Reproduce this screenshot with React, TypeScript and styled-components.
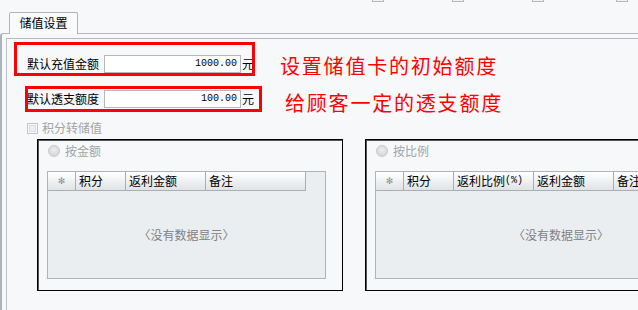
import React from "react";
import styled, { createGlobalStyle } from "styled-components";

const Global = createGlobalStyle`
  html, body { margin: 0; padding: 0; background: #f7f8fa; }
  body { font-family: "Noto Sans CJK SC", "Noto Sans", sans-serif; font-size: 12px; color: #000; }
  #root { width: 638px; height: 310px; overflow: hidden; }
`;

const Page = styled.div`
  width: 638px;
  height: 310px;
  overflow: hidden;
  display: flex;
  flex-direction: column;
  background: #f7f8fa;
`;

const MarkRow = styled.div`
  display: flex;
  height: 2px;
  flex: none;
`;

const Mark = styled.div<{ $left: number }>`
  width: 12px;
  height: 2px;
  box-sizing: border-box;
  margin-left: ${(p) => p.$left}px;
  border: 1px solid #b4b8bc;
  border-top: none;
  background: #f1f2f4;
`;

const TabStrip = styled.div`
  height: 31px;
  flex: none;
  display: flex;
  align-items: flex-end;
  padding-left: 9px;
`;

const Tab = styled.div`
  width: 69px;
  height: 22px;
  box-sizing: border-box;
  margin-bottom: -1px;
  position: relative;
  z-index: 1;
  border: 1px solid #b0b5ba;
  border-bottom: none;
  border-radius: 2px 2px 0 0;
  background: #f9fafb;
  display: flex;
  align-items: center;
  justify-content: center;
  padding-bottom: 2px;
  font-size: 12px;
  line-height: 1;
`;

const Panel = styled.div`
  flex: 1;
  border-top: 1px solid #b4b8bc;
  border-left: 2px solid #aab2ba;
  border-top-left-radius: 3px;
  padding: 4px 0 0 4px;
  display: flex;
  flex-direction: column;
`;

const Inner = styled.div`
  flex: 1;
  border-top: 1px solid #b4b8bc;
  border-left: 1px solid #bcc1c6;
  display: flex;
  flex-direction: column;
`;

const Content = styled.div`
  position: relative;
  padding: 16px 0 0 20px;
  display: flex;
  flex-direction: column;
`;

const Row = styled.div<{ $top?: number }>`
  display: flex;
  align-items: center;
  height: 18px;
  margin-top: ${(p) => p.$top ?? 0}px;
`;

const Label = styled.span`
  width: 77px;
  font-size: 12px;
  line-height: 1;
  white-space: nowrap;
`;

const Input = styled.div`
  width: 137px;
  height: 18px;
  box-sizing: border-box;
  border: 1px solid #b4b8bc;
  background: #fff;
  display: flex;
  align-items: center;
  justify-content: flex-end;
  padding-right: 3px;
  font-family: "Liberation Mono", "DejaVu Sans Mono", monospace;
  font-size: 10px;
  line-height: 1;
`;

const Unit = styled.span`
  margin-left: 1px;
  font-size: 12px;
  line-height: 1;
`;

const Note = styled.span<{ $gap: number; $drop: number }>`
  margin-left: ${(p) => p.$gap}px;
  margin-top: ${(p) => p.$drop}px;
  color: #ff0000;
  font-size: 20px;
  letter-spacing: 1.8px;
  line-height: 20px;
  white-space: nowrap;
`;

const RedFrame = styled.div<{ $x: number; $y: number; $w: number; $h: number }>`
  position: absolute;
  left: ${(p) => p.$x}px;
  top: ${(p) => p.$y}px;
  width: ${(p) => p.$w}px;
  height: ${(p) => p.$h}px;
  box-sizing: border-box;
  border: 3px solid #ff0000;
  pointer-events: none;
`;

const CheckRow = styled.div`
  display: flex;
  align-items: center;
  height: 12px;
  margin-top: 14px;
`;

const CheckBox = styled.span`
  width: 11px;
  height: 11px;
  box-sizing: border-box;
  border: 1px solid #c2c4c7;
  background: #eceef0;
  box-shadow: inset 0 0 0 1px #f7f8f9, inset 0 0 0 2px #dadde0;
`;

const Muted = styled.span`
  margin-left: 4px;
  color: #a2a4a6;
  font-size: 12px;
  line-height: 1;
  white-space: nowrap;
`;

const Groups = styled.div`
  display: flex;
  margin: 5px 0 0 10px;
`;

const Group = styled.div<{ $w: number; $gap?: number }>`
  flex: none;
  width: ${(p) => p.$w}px;
  height: 152px;
  box-sizing: border-box;
  margin-left: ${(p) => p.$gap ?? 0}px;
  border: 1px solid #000;
  box-shadow: inset 1px 1px 0 #555;
  padding: 5px 0 0 10px;
  display: flex;
  flex-direction: column;
`;

const RadioRow = styled.div`
  display: flex;
  align-items: center;
  height: 12px;
`;

const Radio = styled.span`
  width: 12px;
  height: 12px;
  box-sizing: border-box;
  border-radius: 50%;
  border: 1px solid #c8cacc;
  background: radial-gradient(circle at 50% 40%, #eeeff0 0%, #d6d8da 70%);
`;

const RadioText = styled(Muted)`
  margin-left: 5px;
`;

const Grid = styled.div<{ $w: number }>`
  width: ${(p) => p.$w}px;
  height: 108px;
  box-sizing: border-box;
  margin: 14px 0 0 -1px;
  border: 1px solid #aeb3b8;
  background: #ebeef1;
  display: flex;
  flex-direction: column;
`;

const Header = styled.div`
  display: flex;
  align-self: flex-start;
  height: 19px;
  box-sizing: border-box;
  border-bottom: 1px solid #a9aeb3;
`;

const HeadCell = styled.div<{ $w: number; $center?: boolean }>`
  width: ${(p) => p.$w}px;
  box-sizing: border-box;
  border-right: 1px solid #a9aeb3;
  background: linear-gradient(#ffffff, #dfe3e6);
  display: flex;
  align-items: center;
  justify-content: ${(p) => (p.$center ? "center" : "flex-start")};
  padding-left: ${(p) => (p.$center ? 0 : 3)}px;
  font-size: 12px;
  line-height: 1;
  white-space: nowrap;
`;

const Star = styled.span`
  color: #8c8c8c;
  font-family: "DejaVu Sans", sans-serif;
  font-size: 9px;
`;

const Half = styled.span`
  font-family: "Liberation Mono", monospace;
  font-size: 10px;
`;

const Empty = styled.div`
  flex: 1;
  display: flex;
  align-items: center;
  justify-content: center;
  color: #808284;
  font-size: 12px;
  line-height: 1;
`;

type Col = { title: React.ReactNode; w: number };

const DataGrid = ({ width, cols }: { width: number; cols: Col[] }) => (
  <Grid $w={width}>
    <Header>
      <HeadCell $w={28} $center>
        <Star>✻</Star>
      </HeadCell>
      {cols.map((c, i) => (
        <HeadCell key={i} $w={c.w}>
          {c.title}
        </HeadCell>
      ))}
    </Header>
    <Empty>〈没有数据显示〉</Empty>
  </Grid>
);

export default function App() {
  return (
    <Page>
      <Global />
      <MarkRow>
        <Mark $left={372} />
        <Mark $left={68} />
        <Mark $left={68} />
        <Mark $left={72} />
      </MarkRow>
      <TabStrip>
        <Tab>储值设置</Tab>
      </TabStrip>
      <Panel>
        <Inner>
          <Content>
            <Row>
              <Label>默认充值金额</Label>
              <Input>1000.00</Input>
              <Unit>元</Unit>
              <Note $gap={26} $drop={4}>设置储值卡的初始额度</Note>
            </Row>
            <Row $top={17}>
              <Label>默认透支额度</Label>
              <Input>100.00</Input>
              <Unit>元</Unit>
              <Note $gap={31} $drop={8}>给顾客一定的透支额度</Note>
            </Row>
            <CheckRow>
              <CheckBox />
              <Muted>积分转储值</Muted>
            </CheckRow>
            <Groups>
              <Group $w={306}>
                <RadioRow>
                  <Radio />
                  <RadioText>按金额</RadioText>
                </RadioRow>
                <DataGrid
                  width={279}
                  cols={[
                    { title: "积分", w: 50 },
                    { title: "返利金额", w: 80 },
                    { title: "备注", w: 100 },
                  ]}
                />
              </Group>
              <Group $w={400} $gap={22}>
                <RadioRow>
                  <Radio />
                  <RadioText>按比例</RadioText>
                </RadioRow>
                <DataGrid
                  width={372}
                  cols={[
                    { title: "积分", w: 50 },
                    {
                      title: (
                        <>
                          返利比例<Half>(%)</Half>
                        </>
                      ),
                      w: 80,
                    },
                    { title: "返利金额", w: 80 },
                    { title: "备注", w: 100 },
                  ]}
                />
              </Group>
            </Groups>
            <RedFrame $x={7} $y={3} $w={241} $h={34} />
            <RedFrame $x={18} $y={47} $w={237} $h={26} />
          </Content>
        </Inner>
      </Panel>
    </Page>
  );
}
